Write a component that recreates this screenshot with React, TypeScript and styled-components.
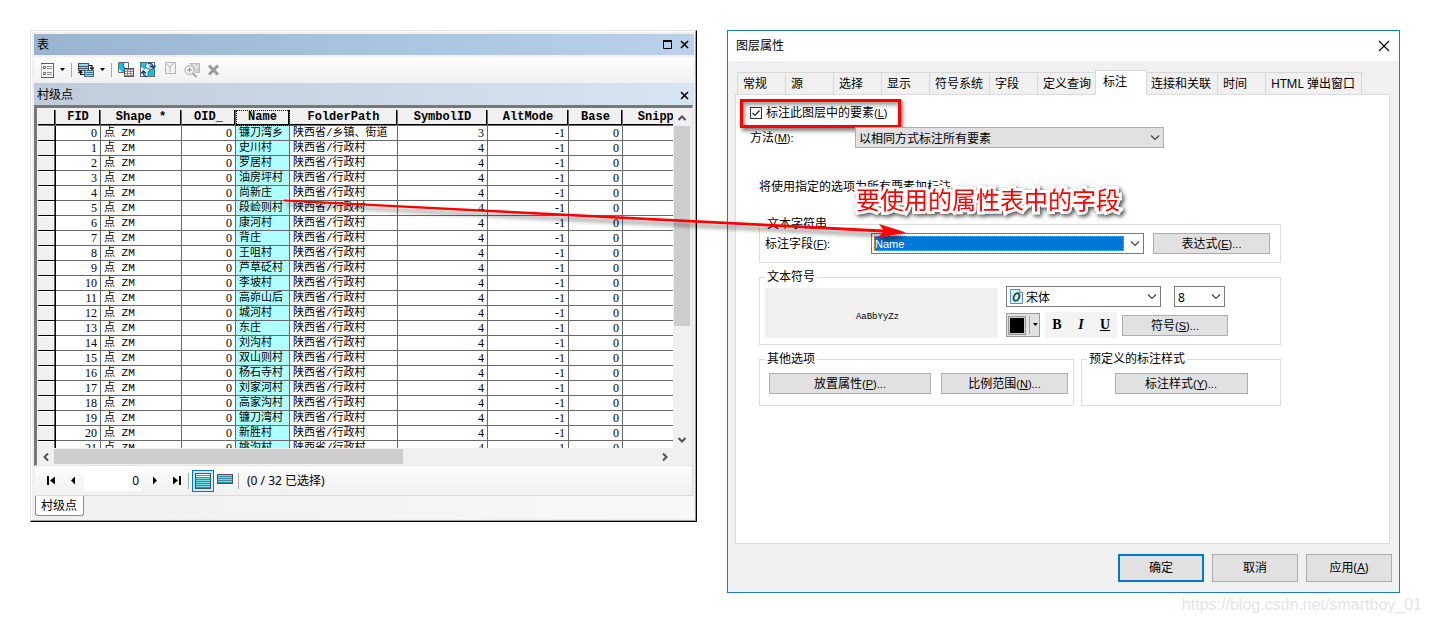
import React from "react";
import styled, { createGlobalStyle, css } from "styled-components";

const cjk = '"Noto Sans CJK SC", sans-serif';

const GlobalStyle = createGlobalStyle`
  * { box-sizing: border-box; }
  body {
    margin: 0;
    background: #fff;
    color: #000;
    font: 12px/16px "Noto Sans", ${cjk};
  }
  button, input, select { font: inherit; color: inherit; margin: 0; }
`;

const Page = styled.main`
  position: relative;
  display: grid;
  grid-template-columns: 667fr 673fr;
  align-items: start;
  gap: 30px;
  padding: 30px;
`;

/* ---------- attribute table window ---------- */

const TableWindow = styled.section`
  display: flex;
  flex-direction: column;
  min-width: 0;
  padding: 3px 2px 2px 3px;
  background: #f0f0f0;
  border: 1px solid #000;
  border-top-color: #e3e3e3;
  border-left-color: #e3e3e3;
  box-shadow: inset -1px -1px 0 #a0a0a0, inset 1px 1px 0 #fff;
`;

const Bar = styled.header<{ $sub?: boolean }>`
  display: flex;
  align-items: center;
  gap: 8px;
  height: ${(p) => (p.$sub ? 22 : 21)}px;
  padding: ${(p) => (p.$sub ? 2 : 0)}px 5px 0 3px;
  background: ${(p) =>
    p.$sub
      ? "linear-gradient(90deg, #bfcddb, #d7e4f2)"
      : "linear-gradient(90deg, #99b4d1, #b9d1ea)"};
`;

const BarTitle = styled.h2`
  flex: 1;
  margin: 0;
  font-size: 12px;
  font-weight: 400;
`;

const GlyphButton = styled.button`
  display: flex;
  align-items: center;
  justify-content: center;
  padding: 0;
  border: 0;
  background: none;
`;

const Toolbar = styled.div`
  display: flex;
  align-items: center;
  gap: 6px;
  height: 28px;
  padding: 2px 7px 0;
  background: linear-gradient(#f0f0f0 2px, #fdfdfd 3px, #f0f0f0);
`;

const Separator = styled.span<{ $h?: number }>`
  width: 1px;
  height: ${(p) => p.$h ?? 14}px;
  background: #a9a9a9;
`;

const Frame = styled.div`
  display: flex;
  flex-direction: column;
  margin-right: 1px;
  padding: 2px 1px 0 1px;
  border: solid #787878;
  border-width: 3px 1px 1px 3px;
  border-right-color: #e3e3e3;
  border-bottom-color: #e3e3e3;
  background: #f0f0f0;
`;

const FrameRow = styled.div`
  display: flex;
`;

const Viewport = styled.div`
  flex: 1;
  min-width: 0;
  height: 338px;
  overflow: hidden;
  background: #fff;
`;

const DataTable = styled.table`
  width: 666px;
  table-layout: fixed;
  border-collapse: separate;
  border-spacing: 0;
`;

const HeadCell = styled.th<{ $active?: boolean }>`
  height: 16px;
  padding: 0;
  overflow: hidden;
  background: #f0f0f0;
  border: solid #696969;
  border-width: 0 1px 1px 0;
  box-shadow: inset -1px -1px 0 #000;
  font: bold 12px/15px "Liberation Mono", monospace;
  ${(p) => p.$active && css`outline: 1px dotted #000; outline-offset: -1px;`}
`;

const RowHead = styled.th`
  height: 15px;
  padding: 0;
  background: #f0f0f0;
  border: solid #000;
  border-width: 0 1px 1px 0;
  box-shadow: inset -1px 0 0 #696969, inset 0 1px 0 #fff;
`;

const Cell = styled.td<{ $num?: boolean; $selected?: boolean }>`
  height: 15px;
  padding: ${(p) => (p.$num ? "0 3px" : "1px 3px 0")};
  overflow: hidden;
  white-space: nowrap;
  border: solid #696969;
  border-width: 0 1px 1px 0;
  background: ${(p) => (p.$selected ? "#afffff" : "#fff")};
  text-align: ${(p) => (p.$num ? "right" : "left")};
  font: ${(p) =>
    p.$num
      ? '12px/14px "Liberation Serif", serif'
      : '11px/13px "Liberation Mono", "Noto Sans CJK SC", monospace'};
`;

const VScroll = styled.div`
  display: flex;
  flex-direction: column;
  align-items: center;
  width: 18px;
`;

const HScroll = styled.div`
  display: flex;
  align-items: center;
  height: 17px;
  padding-right: 18px;
`;

const Arrow = styled(GlyphButton)`
  width: 16px;
  height: 16px;
`;

const VThumb = styled.div`
  width: 16px;
  height: 200px;
  background: #cdcdcd;
`;

const HThumb = styled.div`
  width: 55%;
  height: 15px;
  background: #cdcdcd;
`;

const Filler = styled.div`
  flex: 1;
`;

const Pager = styled.div`
  display: flex;
  align-items: center;
  height: 30px;
  margin: 0 1px;
  padding-left: 5px;
  background: linear-gradient(#fdfdfd, #f0f0f0);
  border: solid #d9d9d9;
  border-width: 0 1px 1px 0;
`;

const NavButton = styled(GlyphButton)`
  width: 22px;
  height: 20px;
`;

const RecordInput = styled.input`
  width: 58px;
  height: 21px;
  margin-right: 2px;
  padding: 0 3px;
  border: 0;
  background: #fff;
  text-align: right;
`;

const ViewButton = styled(GlyphButton)<{ $on?: boolean }>`
  width: 22px;
  height: 22px;
  margin-left: 3px;
  border: 1px solid ${(p) => (p.$on ? "#0078d7" : "transparent")};
  background: ${(p) => (p.$on ? "#cce8ff" : "none")};
  & + & { margin: 0 2px 4px 0; }
`;

const Status = styled.output`
  padding-left: 8px;
`;

const SheetTabs = styled.nav`
  height: 23px;
  padding-left: 1px;
  background: linear-gradient(90deg, #f0f0f0, #f8f8f8);
`;

const SheetTab = styled.button`
  height: 20px;
  padding: 0 6px 0 5px;
  border: 1px solid #8c8c8c;
  border-top: 0;
  border-radius: 0 0 3px 3px;
  background: #fff;
`;

/* ---------- layer properties dialog ---------- */

const Dialog = styled.section`
  min-width: 0;
  background: #f0f0f0;
  border: 1px solid #1a7cc9;
`;

const DialogTitle = styled.header`
  display: flex;
  align-items: center;
  height: 30px;
  padding: 0 8px;
  background: #fff;
`;

const DialogBody = styled.div`
  padding: 9px 9px 10px 7px;
`;

const Tabs = styled.div`
  display: flex;
  align-items: flex-end;
  height: 24px;
  padding-left: 2px;
`;

const Tab = styled.button<{ $active?: boolean }>`
  min-width: 48px;
  height: 22px;
  padding: 0 6px 0 5px;
  text-align: left;
  white-space: nowrap;
  background: #f0f0f0;
  border: solid #d9d9d9;
  border-width: 1px 0 0 1px;
  &:last-child { border-right-width: 1px; }
  ${(p) =>
    p.$active &&
    css`
      position: relative;
      min-width: 52px;
      height: 25px;
      margin: 0 -2px -1px;
      padding: 0 7px 2px;
      border-right-width: 1px;
      background: #fff;
    `}
`;

const Panel = styled.div`
  height: 450px;
  padding: 10px 14px;
  background: #fff;
  border: 1px solid #dcdcdc;
`;

const CheckLabel = styled.label`
  position: relative;
  display: inline-flex;
  align-items: center;
  gap: 4px;
  height: 16px;
  vertical-align: top;
  &::after {
    content: "";
    position: absolute;
    inset: -6px -14px -7px -10px;
    border: 3px solid #f00;
    box-shadow: 2px 3px 4px rgba(0, 0, 0, 0.5), inset 2px 3px 4px rgba(0, 0, 0, 0.4);
    pointer-events: none;
  }
`;

const CheckBox = styled.input`
  appearance: none;
  width: 12px;
  height: 12px;
  border: 1px solid #333;
  background: #fff;
`;

const CheckMark = styled.svg`
  position: absolute;
  left: 0;
  top: 2px;
  pointer-events: none;
`;

const MethodRow = styled.div`
  display: flex;
  align-items: center;
  margin-top: 6px;
`;

const FieldLabel = styled.label<{ $w: number }>`
  width: ${(p) => p.$w}px;
`;

const Key = styled.span`
  font: 11px/16px "Liberation Sans", sans-serif;
`;

const SelectBox = styled.span<{ $w: number; $gray?: boolean }>`
  position: relative;
  display: flex;
  align-items: center;
  width: ${(p) => p.$w}px;
  height: 21px;
  background: ${(p) => (p.$gray ? "#e1e1e1" : "#fff")};
  border: 1px solid ${(p) => (p.$gray ? "#adadad" : "#7a7a7a")};
`;

const Select = styled.select<{ $indent?: number; $focus?: boolean }>`
  appearance: none;
  width: 100%;
  height: 19px;
  padding: 2px 20px 0 ${(p) => p.$indent ?? 3}px;
  border: 0;
  background: none;
  ${(p) =>
    p.$focus &&
    css`
      height: 15px;
      margin: 0 19px 0 2px;
      padding: 1px 1px 0;
      background: #0078d7;
      color: #fff;
      outline: 1px dotted #e8a050;
      outline-offset: -1px;
      font: 11px/14px "Liberation Sans", sans-serif;
    `}
`;

const Chevron = styled.svg`
  position: absolute;
  right: 3px;
  top: 6px;
  pointer-events: none;
`;

const FontIcon = styled.svg`
  position: absolute;
  left: 3px;
  top: 2px;
  pointer-events: none;
`;

const Hint = styled.p`
  margin: 31px 0 22px 9px;
`;

const Groups = styled.div`
  display: flex;
  flex-direction: column;
  gap: 7px;
  max-width: 531px;
  padding-left: 9px;
`;

const Group = styled.fieldset<{ $h: number; $grow?: number }>`
  min-width: 0;
  height: ${(p) => p.$h}px;
  margin: 0;
  padding: 0 5px;
  border: 1px solid #dcdcdc;
  flex: ${(p) => (p.$grow ? `${p.$grow} 1 0` : "none")};
`;

const Legend = styled.legend`
  padding: 0 2px;
  line-height: 14px;
`;

const GroupRow = styled.div<{ $center?: boolean; $top: number; $gap?: number }>`
  display: flex;
  align-items: flex-start;
  justify-content: ${(p) => (p.$center ? "center" : "flex-start")};
  gap: ${(p) => p.$gap ?? 9}px;
  padding: ${(p) => p.$top}px 0 0 ${(p) => (p.$top > 4 && !p.$center ? 4 : 0)}px;
`;

const Button = styled.button<{ $w: number }>`
  width: ${(p) => p.$w}px;
  height: 21px;
  padding: 1px 0 0;
  background: #e1e1e1;
  border: 1px solid #adadad;
  line-height: 18px;
`;

const Preview = styled.div`
  display: flex;
  align-items: center;
  justify-content: center;
  width: 233px;
  height: 50px;
  margin-top: 2px;
  padding: 8px 8px 0 0;
  background: #f0f0f0;
  font: 9px/12px "Liberation Mono", monospace;
`;

const SymbolControls = styled.div`
  display: grid;
  gap: 5px;
`;

const ControlLine = styled.div<{ $gap: number }>`
  display: flex;
  align-items: center;
  gap: ${(p) => p.$gap}px;
`;

const ColorButton = styled.button`
  display: flex;
  align-items: center;
  gap: 3px;
  width: 34px;
  height: 24px;
  padding: 0 1px;
  background: #e1e1e1;
  border: 1px solid #999;
`;

const Swatch = styled.span`
  width: 19px;
  height: 19px;
  border: 1px solid #999;
  outline: 1px solid #ccc;
  outline-offset: -2px;
  background: #000;
`;

const StyleButtons = styled.div`
  display: flex;
  width: 72px;
  height: 26px;
  background: #f3f3f3;
`;

const StyleButton = styled.button`
  flex: 1;
  padding: 0;
  border: 0;
  background: none;
  font: bold 14px/20px "Liberation Serif", serif;
`;

const Footer = styled.footer`
  display: flex;
  justify-content: flex-end;
  gap: 8px;
  padding: 0 7px 10px 0;
`;

const FooterButton = styled.button<{ $primary?: boolean }>`
  width: 86px;
  height: 28px;
  padding: 0;
  background: #e1e1e1;
  border: ${(p) => (p.$primary ? "2px solid #0078d7" : "1px solid #adadad")};
`;

/* ---------- annotations over the windows ---------- */

const ArrowLayer = styled.svg`
  position: absolute;
  left: 280px;
  top: 190px;
  pointer-events: none;
`;

const Callout = styled.p`
  position: absolute;
  left: 856px;
  top: 183px;
  margin: 0;
  font: 24px/32px ${cjk};
  white-space: nowrap;
  color: #f00;
  -webkit-text-stroke: 6px #fff;
  paint-order: stroke fill;
  filter: drop-shadow(2px 2px 2px rgba(0, 0, 0, 0.7));
  pointer-events: none;
`;

const Watermark = styled.span`
  position: absolute;
  right: 8px;
  top: 595px;
  font: 16px/20px "Liberation Sans", sans-serif;
  color: #e4e4e4;
`;

/* ---------- data ---------- */

const columns: [string, number][] = [
  ["FID", 45],
  ["Shape *", 81],
  ["OID_", 54],
  ["Name", 54],
  ["FolderPath", 108],
  ["SymbolID", 90],
  ["AltMode", 81],
  ["Base", 54],
  ["Snippet", 81],
];

const names = [
  "镰刀湾乡", "史川村", "罗居村", "油房坪村", "尚新庄", "段崄则村", "康河村", "背庄",
  "王咀村", "芦草砭村", "李坡村", "高峁山后", "城河村", "东庄", "刘沟村", "双山则村",
  "杨石寺村", "刘家河村", "高家沟村", "镰刀湾村", "新胜村", "姚沟村",
];

const tabs = [
  "常规", "源", "选择", "显示", "符号系统", "字段", "定义查询", "标注",
  "连接和关联", "时间", "HTML 弹出窗口",
];

/* ---------- small drawings ---------- */

const Cross = () => (
  <svg width="9" height="9" viewBox="0 0 9 9">
    <path d="M1 1l7 7M8 1l-7 7" stroke="#000" strokeWidth="1.6" />
  </svg>
);

const Caret = () => (
  <svg width="5" height="4" viewBox="0 0 5 4">
    <path d="M0 0h5L2.500 3z" fill="#000" />
  </svg>
);

const Down = () => (
  <Chevron width="10" height="8" viewBox="0 0 10 8">
    <path d="M1 1.5l4 4 4-4" fill="none" stroke="#444" strokeWidth="1.2" />
  </Chevron>
);

const ScrollArrow = ({ d }: { d: string }) => (
  <svg width="10" height="10" viewBox="0 0 10 10">
    <path d={d} fill="none" stroke="#505050" strokeWidth="2" />
  </svg>
);

const NavGlyph = ({ d }: { d: string }) => (
  <svg width="10" height="9" viewBox="0 0 10 9">
    <path d={d} fill="#000" />
  </svg>
);

const Mnemonic = ({ k, tail = "" }: { k: string; tail?: string }) => (
  <Key>
    (<u>{k}</u>){tail}
  </Key>
);

const OptionsIcon = () => (
  <svg width="13" height="15" viewBox="0 0 13 15">
    <rect x=".5" y=".5" width="12" height="14" fill="#fff" stroke="#4a5f80" />
    <path d="M.5 1v13" stroke="#8fb4e0" />
    <circle cx="3.500" cy="4.500" r="1.200" fill="#fff" stroke="#333" />
    <circle cx="3.500" cy="10.500" r="1.200" fill="#fff" stroke="#333" />
    <path d="M6 3.500h5M6 5.500h5M6 9.500h5M6 11.500h5" stroke="#888" />
  </svg>
);

const RelateIcon = () => (
  <svg width="16" height="16" viewBox="0 0 16 16">
    <rect x=".5" y="1.500" width="10" height="7" fill="#8fdce8" stroke="#444" />
    <path d="M0 1.500h11M1 4.500h9M1 6.500h9" stroke="#3b5a66" />
    <rect x="6.500" y="8.500" width="9" height="6" fill="#8fdce8" stroke="#4b6670" />
    <path d="M7 10.500h8M7 12.500h8" stroke="#2d7f92" />
    <path d="M11 3.500h3v4M12 5.500l2 2 2-2M6 12.500H2.500v-3M.5 11l2-2 2 2" fill="none" stroke="#111" strokeWidth="1.200" />
  </svg>
);

const SelectByIcon = () => (
  <svg width="16" height="16" viewBox="0 0 16 16">
    <path d="M.5.5h10v10H.5z" fill="#fff" stroke="#666" />
    <path d="M1 1h5l-1 3 3 3v3H4L1 7z" fill="#00c8f4" />
    <path d="M6 1L5 4l3 3" fill="none" stroke="#555" />
    <rect x="6.500" y="6.500" width="9" height="8" fill="#fff" stroke="#555" />
    <path d="M7 7.500h8" stroke="#4a9cc0" />
    <path d="M7 9.500h8M7 11.500h8M7 13.500h8M9.500 8v6M12.500 8v6" stroke="#888" />
  </svg>
);

const SwitchIcon = () => (
  <svg width="16" height="16" viewBox="0 0 16 16">
    <rect x=".5" y=".5" width="14" height="14" fill="#fff" stroke="#666" />
    <path d="M1 1h6L5 5l2 2H4L1 5zM8 10l3-3 3 1v6H8z" fill="#00c8f4" />
    <path d="M7 1L5 5l4 2 1 3M8 14v-4l3-3 3 1M10 7V3" fill="none" stroke="#667" />
    <path d="M8 1.500q5-1 5 4M10.500 3.500L13 6l2.500-2.500M7 14.500q-4 0-3.500-5M1 11.500L3.500 9 6 11.500" fill="none" stroke="#0a4da0" strokeWidth="1.600" />
  </svg>
);

const ClearIcon = () => (
  <svg width="16" height="16" viewBox="0 0 16 16">
    <path d="M3.500.5h10v11h-10z" fill="#f2f2f2" stroke="#b4b4b4" />
    <path d="M5 2l3 3v5M8 6l2-4h2" fill="none" stroke="#b8b8b8" />
  </svg>
);

const ZoomSelectedIcon = () => (
  <svg width="16" height="16" viewBox="0 0 16 16">
    <path d="M5.500 1.500h10v9h-4" fill="#d2d2d2" stroke="#b8b8b8" />
    <path d="M10 2l2 4 3-3" fill="none" stroke="#f4f4f4" />
    <circle cx="5.500" cy="8" r="4.500" fill="#f5f5f5" stroke="#a6a6a6" />
    <path d="M3 8h5M5.500 5.500v5" stroke="#909090" />
    <path d="M8.500 11l4 4" stroke="#a6a6a6" strokeWidth="2" />
  </svg>
);

const Rows = ({ h, shade }: { h: number; shade?: boolean }) => (
  <svg width="16" height={h} viewBox={`0 0 16 ${h}`}>
    <rect x=".5" y=".5" width="15" height={h - 1} fill={shade ? "#6fdcec" : "#fff"} stroke="#44575f" />
    {!shade && <rect x="1" y="5" width="14" height="10" fill="#6fdcec" />}
    {Array.from({ length: Math.floor((h - 2) / 2) }, (_, i) => (
      <path key={i} d={`M1 ${2.5 + i * 2}h14`} stroke={shade || i > 1 ? "#3a8c9c" : "#777"} />
    ))}
  </svg>
);

/* ---------- windows ---------- */

const AttributeTable = () => (
  <TableWindow>
    <Bar>
      <BarTitle>表</BarTitle>
      <GlyphButton aria-label="最大化">
        <svg width="9" height="9" viewBox="0 0 9 9">
          <path d="M.5 1h8v7.500h-8z" fill="none" stroke="#000" />
          <path d="M0 1h9" stroke="#000" strokeWidth="2" />
        </svg>
      </GlyphButton>
      <GlyphButton aria-label="关闭"><Cross /></GlyphButton>
    </Bar>
    <Toolbar>
      <GlyphButton aria-label="表选项"><OptionsIcon /></GlyphButton>
      <Caret />
      <Separator />
      <GlyphButton aria-label="相关表"><RelateIcon /></GlyphButton>
      <Caret />
      <Separator />
      <GlyphButton aria-label="按属性选择"><SelectByIcon /></GlyphButton>
      <GlyphButton aria-label="切换选择"><SwitchIcon /></GlyphButton>
      <GlyphButton aria-label="清除所选内容"><ClearIcon /></GlyphButton>
      <GlyphButton aria-label="缩放至所选"><ZoomSelectedIcon /></GlyphButton>
      <GlyphButton aria-label="删除所选">
        <svg width="16" height="14" viewBox="0 0 16 14">
          <path d="M3 2.500l9 9M12 2.500l-9 9" stroke="#9a9a9a" strokeWidth="3" />
        </svg>
      </GlyphButton>
    </Toolbar>
    <Bar $sub>
      <BarTitle>村级点</BarTitle>
      <GlyphButton aria-label="关闭表"><Cross /></GlyphButton>
    </Bar>
    <Frame>
      <FrameRow>
        <Viewport>
          <DataTable>
            <colgroup>
              <col width={18} />
              {columns.map(([name, w]) => <col key={name} width={w} />)}
            </colgroup>
            <thead>
              <tr>
                <HeadCell />
                {columns.map(([name]) => (
                  <HeadCell key={name} $active={name === "Name"}>{name}</HeadCell>
                ))}
              </tr>
            </thead>
            <tbody>
              {names.map((name, i) => (
                <tr key={i}>
                  <RowHead />
                  <Cell $num>{i}</Cell>
                  <Cell>点 ZM</Cell>
                  <Cell $num>0</Cell>
                  <Cell $selected>{name}</Cell>
                  <Cell>{i === 0 ? "陕西省/乡镇、街道" : "陕西省/行政村"}</Cell>
                  <Cell $num>{i === 0 ? 3 : 4}</Cell>
                  <Cell $num>-1</Cell>
                  <Cell $num>0</Cell>
                  <Cell />
                </tr>
              ))}
            </tbody>
          </DataTable>
        </Viewport>
        <VScroll>
          <Arrow aria-label="向上滚动"><ScrollArrow d="M1.500 7L5 3.500 8.500 7" /></Arrow>
          <VThumb />
          <Filler />
          <Arrow aria-label="向下滚动"><ScrollArrow d="M1.500 3L5 6.500 8.500 3" /></Arrow>
        </VScroll>
      </FrameRow>
      <HScroll>
        <Arrow aria-label="向左滚动"><ScrollArrow d="M7 1.500L3.500 5 7 8.500" /></Arrow>
        <HThumb />
        <Filler />
        <Arrow aria-label="向右滚动"><ScrollArrow d="M3 1.500L6.500 5 3 8.500" /></Arrow>
      </HScroll>
    </Frame>
    <Pager>
      <NavButton aria-label="第一条"><NavGlyph d="M1 0h2v9H1zM9 .5v8l-5-4z" /></NavButton>
      <NavButton aria-label="上一条"><NavGlyph d="M7 .5v8l-4-4z" /></NavButton>
      <RecordInput aria-label="记录号" defaultValue="0" />
      <NavButton aria-label="下一条"><NavGlyph d="M3 .5v8l4-4z" /></NavButton>
      <NavButton aria-label="最后一条"><NavGlyph d="M1 .5v8l5-4zM7 0h2v9H7z" /></NavButton>
      <Separator $h={16} />
      <ViewButton $on aria-label="显示所有记录"><Rows h={16} /></ViewButton>
      <ViewButton aria-label="显示所选记录"><Rows h={10} shade /></ViewButton>
      <Separator $h={16} />
      <Status>(0 / 32 已选择)</Status>
    </Pager>
    <SheetTabs><SheetTab>村级点</SheetTab></SheetTabs>
  </TableWindow>
);

const LayerProperties = () => (
  <Dialog>
    <DialogTitle>
      <BarTitle>图层属性</BarTitle>
      <GlyphButton aria-label="关闭对话框">
        <svg width="14" height="12" viewBox="0 0 14 12">
          <path d="M2 1l10 10M12 1L2 11" stroke="#000" strokeWidth="1.100" />
        </svg>
      </GlyphButton>
    </DialogTitle>
    <DialogBody>
      <Tabs role="tablist">
        {tabs.map((t) => (
          <Tab key={t} role="tab" $active={t === "标注"} aria-selected={t === "标注"}>{t}</Tab>
        ))}
      </Tabs>
      <Panel>
        <CheckLabel>
          <CheckBox type="checkbox" defaultChecked />
          <CheckMark width="12" height="12" viewBox="0 0 12 12">
            <path d="M2.500 6L5 8.500l4.500-5" fill="none" stroke="#222" strokeWidth="1.200" />
          </CheckMark>
          <span>标注此图层中的要素<Mnemonic k="L" /></span>
        </CheckLabel>
        <MethodRow>
          <FieldLabel $w={105} htmlFor="method">方法<Mnemonic k="M" tail=":" /></FieldLabel>
          <SelectBox $w={309} $gray>
            <Select id="method"><option>以相同方式标注所有要素</option></Select>
            <Down />
          </SelectBox>
        </MethodRow>
        <Hint>将使用指定的选项为所有要素加标注。</Hint>
        <Groups>
          <Group $h={46}>
            <Legend>文本字符串</Legend>
            <GroupRow $top={2}>
              <ControlLine $gap={0}>
                <FieldLabel $w={106} htmlFor="field">标注字段<Mnemonic k="F" tail=":" /></FieldLabel>
                <SelectBox $w={273}>
                  <Select id="field" $focus><option>Name</option></Select>
                  <Down />
                </SelectBox>
              </ControlLine>
              <Button $w={117}>表达式<Mnemonic k="E" tail="..." /></Button>
            </GroupRow>
          </Group>
          <Group $h={75}>
            <Legend>文本符号</Legend>
            <GroupRow $top={2} $gap={8}>
              <Preview>AaBbYyZz</Preview>
              <SymbolControls>
                <ControlLine $gap={13}>
                  <SelectBox $w={155}>
                    <FontIcon width="13" height="15" viewBox="0 0 13 15">
                      <path d="M.5.5h9l3 3v11H.5z" fill="#dcebfa" stroke="#5c8ec4" />
                      <path d="M9.500.5v3h3" fill="#fff" stroke="#5c8ec4" />
                      <ellipse cx="6.500" cy="8" rx="2.600" ry="4" transform="rotate(20 6.500 8)" fill="none" stroke="#17603a" strokeWidth="1.900" />
                    </FontIcon>
                    <Select aria-label="字体" $indent={19}><option>宋体</option></Select>
                    <Down />
                  </SelectBox>
                  <SelectBox $w={51}>
                    <Select aria-label="字号"><option>8</option></Select>
                    <Down />
                  </SelectBox>
                </ControlLine>
                <ControlLine $gap={5}>
                  <ColorButton aria-label="颜色"><Swatch /><Separator $h={18} /><Caret /></ColorButton>
                  <StyleButtons>
                    <StyleButton>B</StyleButton>
                    <StyleButton><i>I</i></StyleButton>
                    <StyleButton><u>U</u></StyleButton>
                  </StyleButtons>
                  <Button $w={106}>符号<Mnemonic k="S" tail="..." /></Button>
                </ControlLine>
              </SymbolControls>
            </GroupRow>
          </Group>
          <ControlLine $gap={7}>
            <Group $h={54} $grow={303}>
              <Legend>其他选项</Legend>
              <GroupRow $top={7} $gap={10}>
                <Button $w={162}>放置属性<Mnemonic k="P" tail="..." /></Button>
                <Button $w={127}>比例范围<Mnemonic k="N" tail="..." /></Button>
              </GroupRow>
            </Group>
            <Group $h={54} $grow={188}>
              <Legend>预定义的标注样式</Legend>
              <GroupRow $top={7} $center>
                <Button $w={133}>标注样式<Mnemonic k="Y" tail="..." /></Button>
              </GroupRow>
            </Group>
          </ControlLine>
        </Groups>
      </Panel>
    </DialogBody>
    <Footer>
      <FooterButton $primary>确定</FooterButton>
      <FooterButton>取消</FooterButton>
      <FooterButton>应用(<u>A</u>)</FooterButton>
    </Footer>
  </Dialog>
);

export default function App() {
  return (
    <>
      <GlobalStyle />
      <Page>
        <AttributeTable />
        <LayerProperties />
        <Callout>要使用的属性表中的字段</Callout>
        <ArrowLayer width="640" height="64" viewBox="0 0 640 64">
          <defs>
            <filter id="soft" x="-5%" y="-50%" width="110%" height="220%">
              <feDropShadow dx="2" dy="4" stdDeviation="2" floodOpacity=".5" />
            </filter>
          </defs>
          <path
            d="M4 9.500L603 39.500 599 34 626 42.500 597 48 603 42.500 4 11.500z"
            fill="#f00"
            filter="url(#soft)"
          />
        </ArrowLayer>
        <Watermark>https://blog.csdn.net/smartboy_01</Watermark>
      </Page>
    </>
  );
}
